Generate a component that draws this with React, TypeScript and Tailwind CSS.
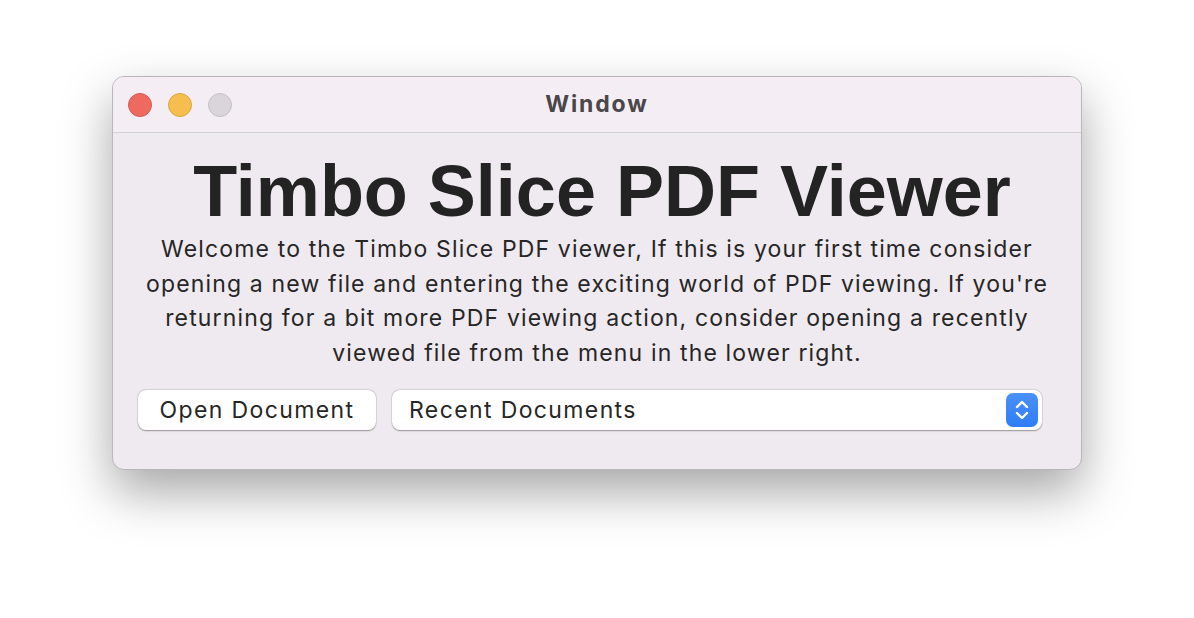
import React from "react";

export default function App() {
  return (
    <div className="w-[1194px] h-[618px] bg-white flex items-start justify-center pt-[76px]" style={{ fontFamily: "Inter, 'Noto Sans', sans-serif" }}>
      <div className="w-[970px] h-[394px] rounded-[12px] border border-[#b9b5b9] bg-[#efeaef] shadow-[0_22px_50px_rgba(0,0,0,0.35)] overflow-hidden flex flex-col">
        <div className="relative h-[56px] shrink-0 bg-[#f4eef4] border-b border-[#d3cfd3] flex items-center justify-center">
          <div className="absolute left-[15px] top-[16px] flex gap-[16px]">
            <div className="w-[24px] h-[24px] rounded-full bg-[#ee6a5f] border border-[#d65a50]" />
            <div className="w-[24px] h-[24px] rounded-full bg-[#f5be4f] border border-[#dca63c]" />
            <div className="w-[24px] h-[24px] rounded-full bg-[#dad5da] border border-[#c5c0c5]" />
          </div>
          <span className="text-[23px] font-bold tracking-[0.08em] text-[#4a464a]">Window</span>
        </div>
        <div className="flex flex-col items-center px-[20px]">
          <h1 className="mt-[18px] pl-[10px] text-[72px] leading-[80px] font-bold text-[#232323]" style={{ fontFamily: "'Liberation Sans', Arial, sans-serif" }}>
            Timbo Slice PDF Viewer
          </h1>
          <p className="mt-[1px] text-center text-[23px] leading-[34.7px] tracking-[0.05em] text-[#262626] whitespace-nowrap">
            Welcome to the Timbo Slice PDF viewer, If this is your first time consider
            <br />
            opening a new file and entering the exciting world of PDF viewing. If you're
            <br />
            returning for a bit more PDF viewing action, consider opening a recently
            <br />
            viewed file from the menu in the lower right.
          </p>
          <div className="mt-[19px] w-full flex gap-[16px] pl-[5px] pr-[19px]">
            <button className="w-[238px] h-[40px] rounded-[8px] bg-white shadow-[0_0.5px_1.5px_rgba(0,0,0,0.35),0_0_0_0.5px_rgba(0,0,0,0.08)] text-[23px] tracking-[0.06em] text-[#262626] flex items-center justify-center">
              Open Document
            </button>
            <div className="flex-1 h-[40px] rounded-[8px] bg-white shadow-[0_0.5px_1.5px_rgba(0,0,0,0.35),0_0_0_0.5px_rgba(0,0,0,0.08)] flex items-center pl-[17px] pr-[4px]">
              <span className="flex-1 text-[23px] tracking-[0.06em] text-[#262626]">Recent Documents</span>
              <div className="w-[32px] h-[34px] rounded-[7px] bg-gradient-to-b from-[#4a90f7] to-[#2f7cf6] flex items-center justify-center">
                <svg width="16" height="24" viewBox="0 0 16 24" fill="none" stroke="white" strokeWidth="2.4" strokeLinecap="round" strokeLinejoin="round">
                  <path d="M3 9 L8 4 L13 9" />
                  <path d="M3 15 L8 20 L13 15" />
                </svg>
              </div>
            </div>
          </div>
        </div>
      </div>
    </div>
  );
}
